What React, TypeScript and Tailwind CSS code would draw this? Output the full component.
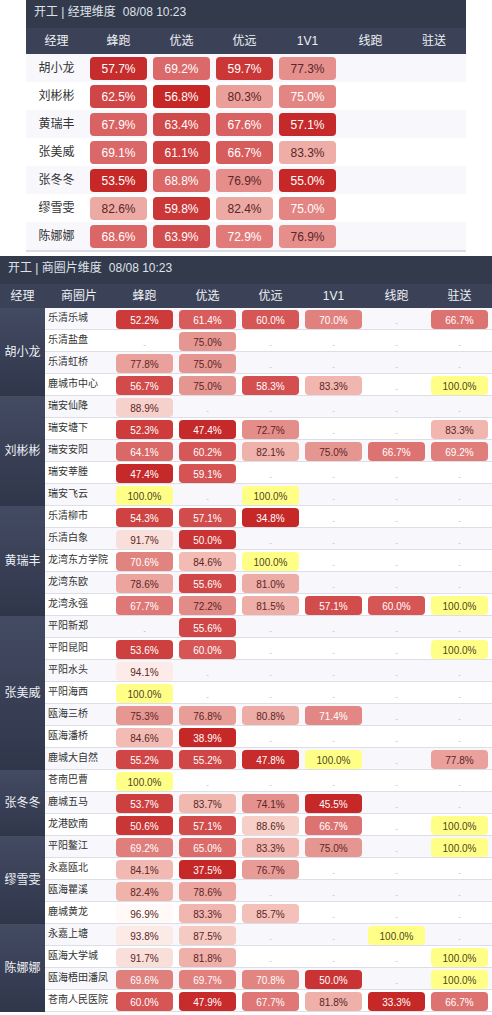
import React from "react";

type V = number | null;

const T1: [string, V[]][] = [
  ["胡小龙", [57.7, 69.2, 59.7, 77.3, null, null]],
  ["刘彬彬", [62.5, 56.8, 80.3, 75.0, null, null]],
  ["黄瑞丰", [67.9, 63.4, 67.6, 57.1, null, null]],
  ["张美威", [69.1, 61.1, 66.7, 83.3, null, null]],
  ["张冬冬", [53.5, 68.8, 76.9, 55.0, null, null]],
  ["缪雪雯", [82.6, 59.8, 82.4, 75.0, null, null]],
  ["陈娜娜", [68.6, 63.9, 72.9, 76.9, null, null]],
];

const _ = null;
const T2: [string, [string, V[]][]][] = [
  [
    "胡小龙",
    [
      ["乐清乐城", [52.2, 61.4, 60.0, 70.0, _, 66.7]],
      ["乐清盐盘", [_, 75.0, _, _, _, _]],
      ["乐清虹桥", [77.8, 75.0, _, _, _, _]],
      ["鹿城市中心", [56.7, 75.0, 58.3, 83.3, _, 100.0]],
    ],
  ],
  [
    "刘彬彬",
    [
      ["瑞安仙降", [88.9, _, _, _, _, _]],
      ["瑞安塘下", [52.3, 47.4, 72.7, _, _, 83.3]],
      ["瑞安安阳", [64.1, 60.2, 82.1, 75.0, 66.7, 69.2]],
      ["瑞安莘塍", [47.4, 59.1, _, _, _, _]],
      ["瑞安飞云", [100.0, _, 100.0, _, _, _]],
    ],
  ],
  [
    "黄瑞丰",
    [
      ["乐清柳市", [54.3, 57.1, 34.8, _, _, _]],
      ["乐清白象", [91.7, 50.0, _, _, _, _]],
      ["龙湾东方学院", [70.6, 84.6, 100.0, _, _, _]],
      ["龙湾东欧", [78.6, 55.6, 81.0, _, _, _]],
      ["龙湾永强", [67.7, 72.2, 81.5, 57.1, 60.0, 100.0]],
    ],
  ],
  [
    "张美威",
    [
      ["平阳新郑", [_, 55.6, _, _, _, _]],
      ["平阳昆阳", [53.6, 60.0, _, _, _, 100.0]],
      ["平阳水头", [94.1, _, _, _, _, _]],
      ["平阳海西", [100.0, _, _, _, _, _]],
      ["瓯海三桥", [75.3, 76.8, 80.8, 71.4, _, _]],
      ["瓯海潘桥", [84.6, 38.9, _, _, _, _]],
      ["鹿城大自然", [55.2, 55.2, 47.8, 100.0, _, 77.8]],
    ],
  ],
  [
    "张冬冬",
    [
      ["苍南巴曹", [100.0, _, _, _, _, _]],
      ["鹿城五马", [53.7, 83.7, 74.1, 45.5, _, _]],
      ["龙港欧南", [50.6, 57.1, 88.6, 66.7, _, 100.0]],
    ],
  ],
  [
    "缪雪雯",
    [
      ["平阳鳌江", [69.2, 65.0, 83.3, 75.0, _, 100.0]],
      ["永嘉瓯北", [84.1, 37.5, 76.7, _, _, _]],
      ["瓯海瞿溪", [82.4, 78.6, _, _, _, _]],
      ["鹿城黄龙", [96.9, 83.3, 85.7, _, _, _]],
    ],
  ],
  [
    "陈娜娜",
    [
      ["永嘉上塘", [93.8, 87.5, _, _, 100.0, _]],
      ["瓯海大学城", [91.7, 81.8, _, _, _, 100.0]],
      ["瓯海梧田潘凤", [69.6, 69.7, 70.8, 50.0, _, 100.0]],
      ["苍南人民医院", [60.0, 47.9, 67.7, 81.8, 33.3, 66.7]],
    ],
  ],
];

const COLS = ["蜂跑", "优选", "优远", "1V1", "线跑", "驻送"];

function rgb(h: string): number[] {
  return [1, 3, 5].map((i) => parseInt(h.slice(i, i + 2), 16));
}

function scale(stops: [number, string][], v: number): string {
  if (v <= stops[0][0]) return stops[0][1];
  for (let i = 1; i < stops.length; i++) {
    if (v <= stops[i][0]) {
      const [a, ca] = stops[i - 1];
      const [b, cb] = stops[i];
      const t = (v - a) / (b - a);
      const A = rgb(ca);
      const B = rgb(cb);
      const m = A.map((x, k) => Math.round(x + (B[k] - x) * t));
      return `rgb(${m[0]},${m[1]},${m[2]})`;
    }
  }
  return stops[stops.length - 1][1];
}

const S1: [number, string][] = [
  [57, "#c62828"],
  [69, "#db6868"],
  [84, "#efb1aa"],
];
const S2: [number, string][] = [
  [47, "#c62828"],
  [60, "#d65656"],
  [72, "#e38a86"],
  [85, "#f2bdb5"],
  [97, "#fffaf8"],
];

function style1(v: number) {
  return { background: scale(S1, v), color: v < 76 ? "#ffffff" : "#5a2626" };
}
function style2(v: number) {
  if (v >= 100) return { background: "#ffff88", color: "#4f4520" };
  return { background: scale(S2, v), color: v < 71.5 ? "#ffffff" : "#5a2626" };
}

function fmt(v: number) {
  return v.toFixed(1) + "%";
}

export default function App() {
  return (
    <div className="w-[492px] bg-white font-['Liberation_Sans','Noto_Sans_CJK_SC',sans-serif]">
      {/* Section 1 */}
      <div className="ml-[26px] w-[440px] border-b-2 border-[#dcdce6]">
        <div className="h-[28px] bg-[#333a4c] pl-[8px] pt-[5px] text-[12px] leading-[15px] text-[#dfe2ea]">
          开工 | 经理维度<span className="ml-[7px]">08/08 10:23</span>
        </div>
        <div className="grid h-[26px] grid-cols-[61px_repeat(5,63px)_64px] items-center bg-[#3b4257] text-center text-[12px] text-[#eef0f5]">
          <div>经理</div>
          {COLS.map((c) => (
            <div key={c}>{c}</div>
          ))}
        </div>
        {T1.map(([name, vals], i) => (
          <div
            key={name}
            className={`grid h-[28px] grid-cols-[61px_repeat(5,63px)_64px] items-center ${
              i % 2 === 0 ? "bg-[#f7f7fc]" : "bg-white"
            }`}
          >
            <div className="text-center text-[12px] text-[#333333]">{name}</div>
            {vals.map((v, k) => (
              <div key={k} className="px-[3px]">
                {v !== null ? (
                  <div
                    className="flex h-[23px] items-center justify-center rounded-[4px] pt-[2px] text-[12px]"
                    style={style1(v)}
                  >
                    {fmt(v)}
                  </div>
                ) : null}
              </div>
            ))}
          </div>
        ))}
      </div>

      {/* Section 2 */}
      <div className="mt-[4px] w-[492px]">
        <div className="h-[28px] bg-[#333a4c] pl-[8px] pt-[5px] text-[12px] leading-[15px] text-[#dfe2ea]">
          开工 | 商圈片维度<span className="ml-[7px]">08/08 10:23</span>
        </div>
        <div className="grid h-[24px] grid-cols-[45px_68px_repeat(6,63px)] items-center bg-[#3b4257] text-center text-[12px] text-[#eef0f5]">
          <div>经理</div>
          <div>商圈片</div>
          {COLS.map((c) => (
            <div key={c}>{c}</div>
          ))}
        </div>
        {(() => {
          let idx = 0;
          return T2.map(([mgr, rows]) => (
            <div key={mgr} className="flex">
              <div className="flex w-[45px] items-center justify-center bg-gradient-to-b from-[#434b63] to-[#30364a] text-[12px] text-[#eef0f5]">
                {mgr}
              </div>
              <div className="flex w-[447px] flex-col">
                {rows.map(([area, vals]) => {
                  const even = idx++ % 2 === 0;
                  return (
                    <div
                      key={area}
                      className={`grid h-[22px] grid-cols-[68px_repeat(6,63px)] border-b border-[#dedee6] ${
                        even ? "bg-[#f8f8fc]" : "bg-white"
                      }`}
                    >
                      <div className="flex items-center pb-[2px] pl-[3px] text-[10px] text-[#333333]">
                        {area}
                      </div>
                      {vals.map((v, k) => (
                        <div key={k} className="px-[3px] pt-[2px]">
                          {v !== null ? (
                            <div
                              className="flex h-[19px] items-center justify-center rounded-[4px] pt-[1px] text-[10px]"
                              style={style2(v)}
                            >
                              {fmt(v)}
                            </div>
                          ) : (
                            <div className="flex h-[19px] items-center justify-center pt-[6px] text-[8px] leading-none text-[#b8b8c2]">
                              -
                            </div>
                          )}
                        </div>
                      ))}
                    </div>
                  );
                })}
              </div>
            </div>
          ));
        })()}
      </div>
    </div>
  );
}
